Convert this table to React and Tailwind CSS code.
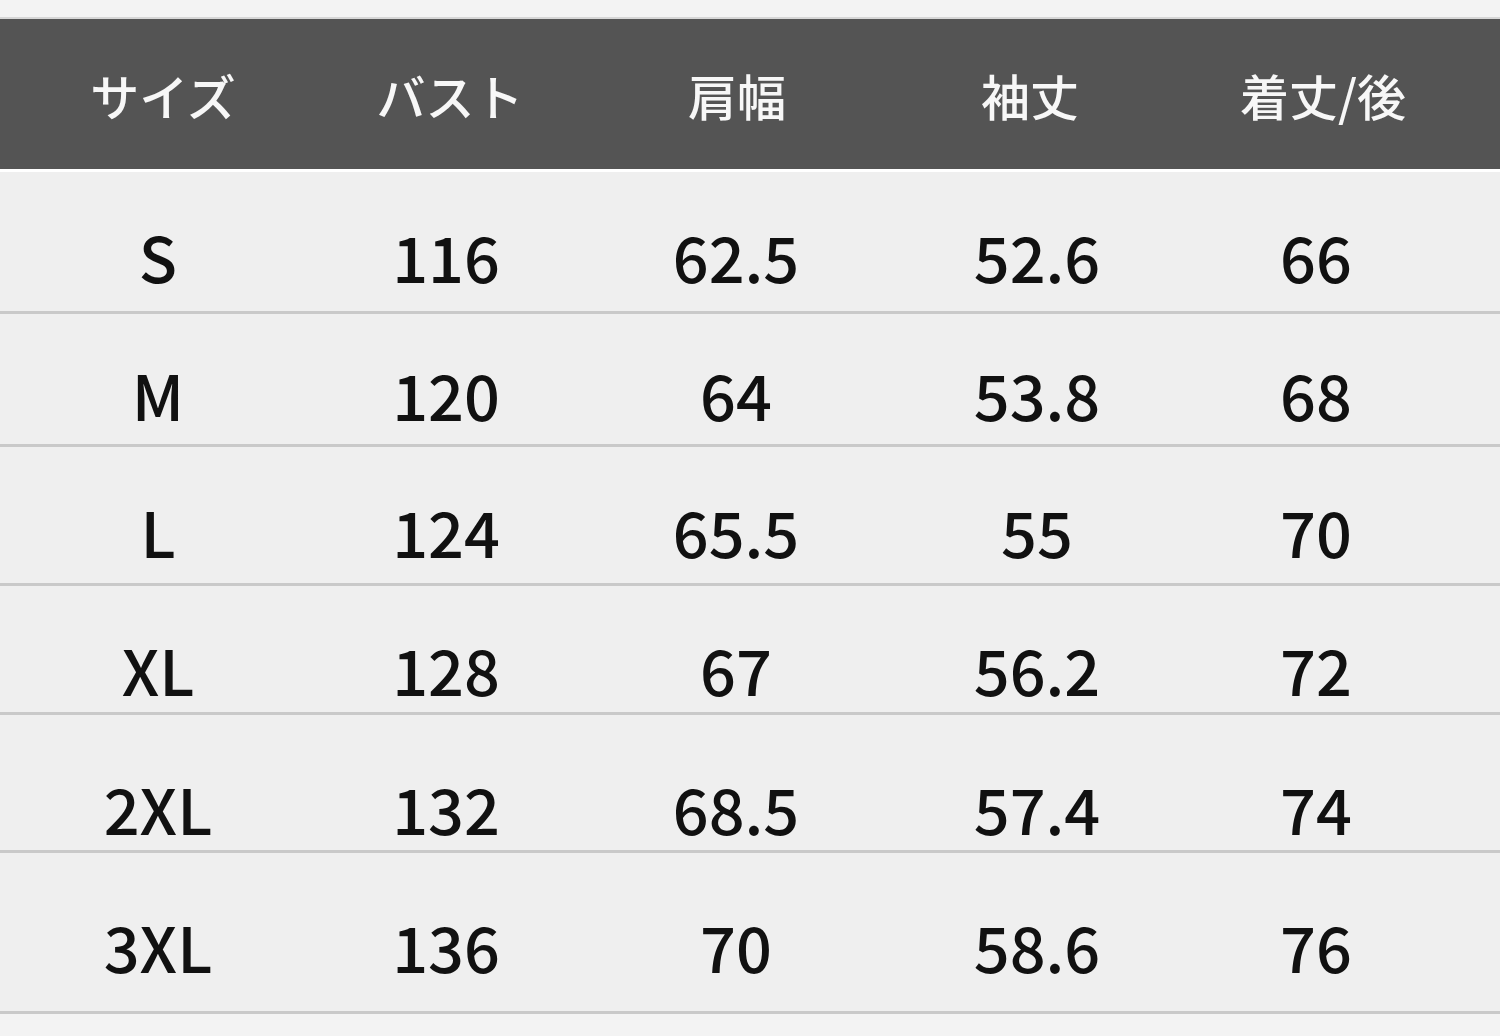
import React from 'react';

const headers = ['サイズ', 'バスト', '肩幅', '袖丈', '着丈/後'];

const rows = [
  { cells: ['S', '116', '62.5', '52.6', '66'], h: 'h-[142px]', pt: 'pt-[52px]' },
  { cells: ['M', '120', '64', '53.8', '68'], h: 'h-[133px]', pt: 'pt-[48px]' },
  { cells: ['L', '124', '65.5', '55', '70'], h: 'h-[139px]', pt: 'pt-[52px]' },
  { cells: ['XL', '128', '67', '56.2', '72'], h: 'h-[129px]', pt: 'pt-[51px]' },
  { cells: ['2XL', '132', '68.5', '57.4', '74'], h: 'h-[138px]', pt: 'pt-[61px]' },
  { cells: ['3XL', '136', '70', '58.6', '76'], h: 'h-[161px]', pt: 'pt-[61px]' },
];

const App = () => {
  return (
    <div className="w-[1500px] h-[1036px] overflow-hidden bg-[#efefef] font-['Noto_Sans_CJK_JP',sans-serif]">
      {/* top strip */}
      <div className="h-[19px] bg-[#f3f3f3] border-b-2 border-[#d6d6d6]" />

      {/* header */}
      <div className="h-[150px] bg-[#545454] grid grid-cols-[326px_248px_326px_260px_326px] items-center">
        {headers.map((h) => (
          <div key={h} className="text-center text-[49px] leading-none font-medium text-[#f7f7f7]">
            {h}
          </div>
        ))}
      </div>
      <div className="h-[3px] bg-white" />

      {/* body rows */}
      {rows.map((r) => (
        <div
          key={r.cells[0]}
          className={`${r.h} border-b-[3px] border-[#c9c9c9] grid grid-cols-[316px_260px_320px_282px_276px] items-start`}
        >
          {r.cells.map((c, i) => (
            <div key={i} className={`${r.pt} text-center text-[63px] leading-none font-medium text-[#111111]`}>
              {c}
            </div>
          ))}
        </div>
      ))}

      {/* bottom strip */}
      <div className="h-[22px] bg-[#f3f3f3]" />
    </div>
  );
};

export default App;
